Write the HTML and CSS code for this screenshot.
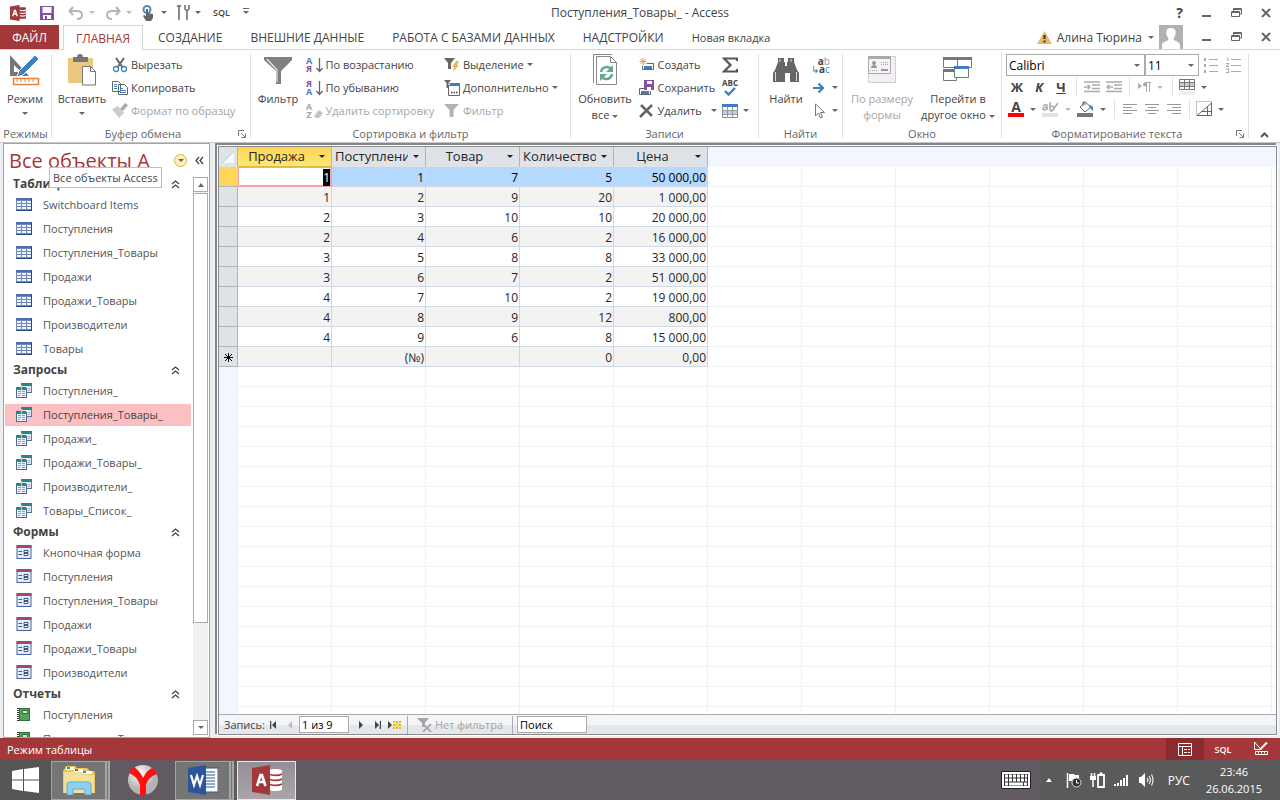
FILE: index.html
```
<!DOCTYPE html>
<html lang="ru">
<head>
    <meta charset="UTF-8">
    <meta name="viewport" content="width=device-width, initial-scale=1.0">
    <title>Поступления_Товары_ - Access</title>
    <link rel="stylesheet" href="styles.css">
</head>
<body>
    <!-- Shared icons -->
    <svg class="sprite" aria-hidden="true">
        <symbol id="i-table" viewBox="0 0 16 13">
            <rect width="16" height="13" fill="#6d88bd"/><rect width="16" height="2" fill="#4a6fb5"/>
            <path d="M1 3h4v2H1zM6 3h4v2H6zM11 3h4v2h-4zM1 6h4v2H1zM6 6h4v2H6zM11 6h4v2h-4zM1 9h4v2H1zM6 9h4v2H6zM11 9h4v2h-4z" fill="#eef3fd"/>
            <path d="M0 12.500h16M15.500 0v13" stroke="#2f4a78"/>
        </symbol>
        <symbol id="i-query" viewBox="0 0 16 15">
            <rect x="5.500" y=".5" width="10" height="9" fill="#e9f0fa" stroke="#56789c"/><rect x="5" width="11" height="3" fill="#2e8580"/>
            <path d="M8 5.500h3M12 5.500h2M12 7.500h2" stroke="#90a5c4"/>
            <rect x=".5" y="5.500" width="10" height="9" fill="#eff4fc" stroke="#4c6c98"/><rect y="4" width="10" height="3" fill="#2e8580"/>
            <path d="M2 8.500h3M6 8.500h3M2 10.500h3M6 10.500h3M2 12.500h2M6 12.500h3" stroke="#8d9cb8"/><path d="M5.500 2v6" stroke="#b9cfe0"/>
        </symbol>
        <symbol id="i-form" viewBox="0 0 15 14">
            <rect x=".5" y=".5" width="14" height="13" fill="#e3ecfb" stroke="#4a6498"/><rect width="15" height="3" fill="#a9466f"/>
            <path d="M2 6.500h3.500M2 9.500h3.500" stroke="#3c5384"/><path d="M7.500 5.500h4v2h-4zM7.500 8.500h4v2h-4z" fill="#fff" stroke="#3c5384"/>
        </symbol>
        <symbol id="i-report" viewBox="0 0 14 13">
            <rect x="2" width="11" height="13" fill="#2f7237"/><rect x="3" y="1" width="9" height="11" fill="#55a05c"/>
            <rect x="5.500" y="2.500" width="5" height="3" fill="#d5edd5" stroke="#2f7237"/><path d="M1 0v13" stroke="#333" stroke-width="2" stroke-dasharray="1 1"/>
        </symbol>
        <symbol id="i-up2" viewBox="0 0 9 9">
            <path d="M1 4l3.500-3L8 4M1 8l3.500-3L8 8" fill="none" stroke="#444" stroke-width="1.300"/>
        </symbol>
        <symbol id="i-funnel" viewBox="0 0 28 28">
            <path d="M0 0h28v3L17 14v13h-5V14L0 3z" fill="#808080"/><path d="M3 2l10 11v12" fill="none" stroke="#e8e8e8" stroke-width="1.200"/>
        </symbol>
        <symbol id="i-sort" viewBox="0 0 14 16"><path d="M10.500 1v13M7.500 11l3 3.500 3-3.500" fill="none" stroke="#666" stroke-width="1.300"/></symbol>
        <symbol id="i-min" viewBox="0 0 10 10"><path d="M0 8h9" stroke="#666" stroke-width="2"/></symbol>
        <symbol id="i-restore" viewBox="0 0 11 10"><path d="M2.500 3V.5h8V6H8.500M.5 3.500h8v5h-8zM2 1.500h8M1 4.500h7" fill="none" stroke="#666"/></symbol>
        <symbol id="i-close" viewBox="0 0 10 10"><path d="M1 1l8 8M9 1L1 9" stroke="#666" stroke-width="2"/></symbol>
        <symbol id="i-launch" viewBox="0 0 8 8"><path d="M.5 6V.5H6M3 3l4 4M7.500 3.500v4h-4" fill="none" stroke="#777"/></symbol>
        <symbol id="i-access" viewBox="0 0 30 30">
            <path d="M17 4h9c3 0 4 1 4 2.500v17c0 1.500-1 2.500-4 2.500h-9z" fill="#a4373a"/>
            <path d="M18 10q7 2 12-.5M18 15q7 2 12-.5M18 20q7 2 12-.5" fill="none" stroke="#fff" stroke-width="2"/>
            <path d="M0 3L18 0v30L0 27z" fill="#a4373a"/>
            <path d="M5 21L8.500 10h1.500l3.500 11M6 17h7" fill="none" stroke="#fff" stroke-width="2.600"/>
        </symbol>
        <symbol id="i-access-task" viewBox="0 0 30 30">
            <path d="M17 6q0-2 6.500-2t6.500 2v18q0 2-6.500 2T17 24z" fill="#fff"/>
            <path d="M18 9.500q7 2 12-.5M18 14.500q7 2 12-.5M18 19.500q7 2 12-.5" fill="none" stroke="#a4373a" stroke-width="1.600"/>
            <path d="M0 3L18 0v30L0 27z" fill="#a4373a"/>
            <path d="M5 21L8.500 10h1.500l3.500 11M6 17h7" fill="none" stroke="#fff" stroke-width="2.600"/>
        </symbol>
    </svg>

    <header class="titlebar">
        <div class="quick">
            <svg class="q-app" width="16" height="16"><use href="#i-access"/></svg>
            <button class="q-btn q-save" aria-label="Сохранить"><svg width="14" height="14" viewBox="0 0 14 14"><path d="M0 0h14v14H0z" fill="#8350a5"/><path d="M2.500 1h9v6h-9zM3 9h8v4H7v-3H5v3H3z" fill="#fff"/></svg></button>
            <button class="q-btn" aria-label="Отменить"><svg width="16" height="14" viewBox="0 0 16 14"><path d="M5 1L1.500 5 5 9M2 5h7q5 0 5 4t-5 4" fill="none" stroke="#b5b5b5" stroke-width="2"/></svg><i class="caret dim"></i></button>
            <button class="q-btn" aria-label="Вернуть"><svg width="16" height="14" viewBox="0 0 16 14"><path d="M11 1l3.500 4L11 9M14 5H7q-5 0-5 4t5 4" fill="none" stroke="#b5b5b5" stroke-width="2"/></svg><i class="caret dim"></i></button>
            <button class="q-btn" aria-label="Режим касания"><svg width="14" height="16" viewBox="0 0 14 16"><circle cx="5" cy="4.500" r="3.500" fill="none" stroke="#4f86bd" stroke-width="2"/><path d="M4 4h2v4l5 1v4l-2 3H4L1 11l1-1 2 1z" fill="#666"/></svg><i class="caret"></i></button>
            <button class="q-btn" aria-label="Настройка"><svg width="13" height="15" viewBox="0 0 13 15"><path d="M0 1h4M2 1v6M2 8v7M1 8h2M8 0v4l2 2 2-2V0M10 6v9" fill="none" stroke="#808080" stroke-width="1.800"/></svg><i class="caret"></i></button>
            <button class="q-btn q-sql">SQL</button>
            <button class="q-btn" aria-label="Настроить панель"><i class="bar-caret"></i></button>
        </div>
        <h1 class="title">Поступления_Товары_ - Access</h1>
        <div class="win-btns">
            <button aria-label="Справка" class="help">?</button>
            <button aria-label="Свернуть"><svg width="10" height="10"><use href="#i-min"/></svg></button>
            <button aria-label="Восстановить"><svg width="11" height="10"><use href="#i-restore"/></svg></button>
            <button aria-label="Закрыть"><svg width="10" height="10"><use href="#i-close"/></svg></button>
        </div>
    </header>

    <nav class="tabs">
        <button class="tab file">ФАЙЛ</button>
        <button class="tab active">ГЛАВНАЯ</button>
        <button class="tab">СОЗДАНИЕ</button>
        <button class="tab">ВНЕШНИЕ ДАННЫЕ</button>
        <button class="tab">РАБОТА С БАЗАМИ ДАННЫХ</button>
        <button class="tab">НАДСТРОЙКИ</button>
        <button class="tab custom">Новая вкладка</button>
        <div class="account">
            <svg width="15" height="13" viewBox="0 0 15 13"><path d="M7.500 0L15 13H0z" fill="#e8b968"/><path d="M7.500 4v4M7.500 9.500v2" stroke="#333" stroke-width="2"/></svg>
            <button class="user">Алина Тюрина<i class="caret"></i></button>
            <svg width="24" height="24" viewBox="0 0 24 24"><path d="M0 0h24v24H0z" fill="#b1b1b1"/><path d="M12 3c6 0 5 6 4 8s-2 3-1 4 6 2 6 5v4H3v-4c0-3 5-4 6-5s0-2-1-4-2-8 4-8z" fill="#fff"/></svg>
        </div>
        <div class="win-btns">
            <button aria-label="Свернуть окно"><svg width="10" height="10"><use href="#i-min"/></svg></button>
            <button aria-label="Восстановить окно"><svg width="11" height="10"><use href="#i-restore"/></svg></button>
            <button aria-label="Закрыть окно"><svg width="10" height="10"><use href="#i-close"/></svg></button>
        </div>
    </nav>

    <section class="ribbon">
        <div class="group g-views">
            <div class="group-body">
                <button class="big"><svg width="32" height="32" viewBox="0 0 32 32"><path d="M1 1v21h19z" fill="#777"/><path d="M5 11v7h7z" fill="#fff"/><path d="M26 1l4 4-16 16-6 2 2-6z" fill="#4080c0" stroke="#fff"/><path d="M4.500 24.500h25v6h-25z" fill="#fff" stroke="#e8823a" stroke-width="1.500"/><path d="M8 25v3M12 25v3M16 25v3M20 25v3M24 25v3" stroke="#e8823a"/></svg><span>Режим</span><i class="caret"></i></button>
            </div>
            <div class="group-name">Режимы</div>
        </div>

        <div class="group g-clip">
            <div class="group-body">
                <button class="big"><svg width="32" height="32" viewBox="0 0 32 32"><path d="M2 4h25v25H2z" fill="#ecc780"/><path d="M7 3h4q0-3 3-3t3 3h5v5H7z" fill="#777"/><path d="M16.500 12.500h8l5 5V31h-13z" fill="#fff" stroke="#777"/><path d="M24.500 12.500v5h5" fill="none" stroke="#777"/></svg><span>Вставить</span><i class="caret"></i></button>
                <div class="stack">
                    <button class="small"><svg width="16" height="16" viewBox="0 0 16 16"><path d="M4 1l7 10M12 1L5 11" stroke="#666" stroke-width="2"/><circle cx="4" cy="12" r="2.500" fill="#fff" stroke="#3f7fbf" stroke-width="1.300"/><circle cx="12" cy="12" r="2.500" fill="#fff" stroke="#3f7fbf" stroke-width="1.300"/></svg>Вырезать</button>
                    <button class="small"><svg width="16" height="16" viewBox="0 0 16 16"><path d="M.5 1.500h6l2 2v8h-8zM6.500 4.500h6l3 3v7h-9z" fill="#fff" stroke="#666"/><path d="M2 4.500h3M2 6.500h3M2 8.500h3M8 8.500h3M8 10.500h6M8 12.500h6" stroke="#3f7fbf"/></svg>Копировать</button>
                    <button class="small" disabled><svg width="16" height="16" viewBox="0 0 16 16"><path d="M0 6l6-3 6 7-5 5z" fill="#ccc"/><path d="M8 6l5-6 3 2-5 6z" fill="#aaa"/></svg>Формат по образцу</button>
                </div>
            </div>
            <div class="group-name with-launch">Буфер обмена<button class="launch" aria-label="Параметры буфера"><svg width="8" height="8"><use href="#i-launch"/></svg></button></div>
        </div>

        <div class="group g-sort">
            <div class="group-body">
                <button class="big"><svg width="28" height="32" viewBox="0 0 28 32"><use href="#i-funnel" width="28" height="28" y="3"/></svg><span>Фильтр</span></button>
                <div class="stack">
                    <button class="small"><span class="letters"><b class="blue">А</b><b class="violet">Я</b></span><svg class="arrow" width="14" height="16"><use href="#i-sort"/></svg>По возрастанию</button>
                    <button class="small"><span class="letters"><b class="violet">Я</b><b class="blue">А</b></span><svg class="arrow" width="14" height="16"><use href="#i-sort"/></svg>По убыванию</button>
                    <button class="small" disabled><span class="letters"><b>A</b><b>Z</b></span><svg class="arrow" width="14" height="16" viewBox="0 0 14 16"><path d="M5 13l5-6 4 3-4 5H7z" fill="#c4c4c4"/></svg>Удалить сортировку</button>
                </div>
                <div class="stack">
                    <button class="small"><svg width="16" height="16" viewBox="0 0 16 16"><path d="M0 1h11L7 6v6H4V6z" fill="#666"/><path d="M12 4l3 0-2 4h2l-6 7 1-5H8z" fill="#ecb450"/></svg>Выделение<i class="caret"></i></button>
                    <button class="small"><svg width="16" height="16" viewBox="0 0 16 16"><path d="M0 0h7L4.500 3v5h-2V3z" fill="#666"/><path d="M4.500 5.500h11v10h-11z" fill="#fff" stroke="#666"/><path d="M5 3h11v3H7z" fill="#3f7fbf"/><path d="M7 12.500h1.500M9.500 12.500H11M12 12.500h1.500" stroke="#444" stroke-width="1.500"/></svg>Дополнительно<i class="caret"></i></button>
                    <button class="small" disabled><svg width="16" height="16" viewBox="0 0 16 16"><path d="M0 1h15L9.500 7v7h-4V7z" fill="#b3b3b3"/></svg>Фильтр</button>
                </div>
            </div>
            <div class="group-name">Сортировка и фильтр</div>
        </div>

        <div class="group g-rec">
            <div class="group-body">
                <button class="big wide"><svg width="26" height="32" viewBox="0 0 26 32"><path d="M20 .5H1.500V29" fill="none" stroke="#888"/><path d="M4.500 2.500h14l6 6v22h-20z" fill="#fff" stroke="#888"/><path d="M18.500 2.500v6h6" fill="none" stroke="#888"/><path d="M9 18q1-5 6-5 3 0 4 2M20 20q-1 5-6 5-3 0-4-2" fill="none" stroke="#69a88c" stroke-width="2.600"/><path d="M21 11v7h-7zM8 27v-7h7z" fill="#69a88c"/></svg><span>Обновить<br>все<i class="caret"></i></span></button>
                <div class="stack">
                    <button class="small"><svg width="16" height="16" viewBox="0 0 16 16"><path d="M3.500 6.500h11v6h-11z" fill="#fff" stroke="#666"/><path d="M5 9h8v3H5z" fill="#3f7fbf"/><circle cx="4" cy="5" r="4" fill="#fff"/><path d="M4 1v7M.5 4.500h7M1.500 2l5 5M6.500 2l-5 5" stroke="#e8a050"/></svg>Создать</button>
                    <button class="small"><svg width="16" height="16" viewBox="0 0 16 16"><path d="M5 8.500H.5v6h11V11" fill="none" stroke="#666"/><path d="M2 11h8v3H2z" fill="#3f7fbf"/><path d="M5 0h10v10H5z" fill="#8350a5"/><path d="M8 1h5v3H8zM8 7h4v3H8z" fill="#fff"/></svg>Сохранить</button>
                    <button class="small"><svg width="16" height="16" viewBox="0 0 16 16"><path d="M2 2l11 11M13 2L1 14" stroke="#666" stroke-width="2.500"/></svg>Удалить<i class="caret far"></i></button>
                </div>
                <div class="stack icons">
                    <button class="small" aria-label="Итоги"><svg width="16" height="16" viewBox="0 0 16 16"><path d="M15 4V1.500H2L8.500 8 2 14.500h13V12" fill="none" stroke="#555" stroke-width="2.200"/></svg></button>
                    <button class="small" aria-label="Орфография"><span class="abc">ABC<svg width="12" height="9" viewBox="0 0 12 9"><path d="M1 4l3.500 3.500L11 1" fill="none" stroke="#3f7fbf" stroke-width="2.400"/></svg></span></button>
                    <button class="small" aria-label="Дополнительно"><svg width="16" height="16" viewBox="0 0 16 16"><path d="M.5 1.500h15v13H.5z" fill="#fff" stroke="#888"/><path d="M0 1h16v3H0z" fill="#3f7fbf"/><path d="M1 8h14v3H1z" fill="#b9d2ea"/><path d="M5.500 4v11M10.500 4v11M1 7.500h15M1 11.500h15" stroke="#999"/></svg><i class="caret"></i></button>
                </div>
            </div>
            <div class="group-name">Записи</div>
        </div>

        <div class="group g-find">
            <div class="group-body">
                <button class="big"><svg width="26" height="32" viewBox="0 0 26 32"><path d="M5 4h6v4h1v4h2V8h1V4h6v4l3 8 2 3v9h-9v-9h-5v9H0v-9l2-3 3-8z" fill="#666"/><path d="M2.500 18v9M7 5v3M23.500 18v9M18 5v3" stroke="#ddd"/></svg><span>Найти</span></button>
                <div class="stack icons">
                    <button class="small" aria-label="Заменить"><span class="replace"><b>a</b>b<br><b><em>↳</em>a</b><em>c</em></span></button>
                    <button class="small" aria-label="Перейти"><svg width="16" height="16" viewBox="0 0 16 16"><path d="M2 8h9M7.500 3.500L12 8l-4.500 4.500" fill="none" stroke="#3f7fbf" stroke-width="2.200"/></svg><i class="caret"></i></button>
                    <button class="small" aria-label="Выделить"><svg width="16" height="16" viewBox="0 0 16 16"><path d="M4.500 1v12l3-3 2 5 2-1-2-4.500h4z" fill="#fff" stroke="#777"/></svg><i class="caret"></i></button>
                </div>
            </div>
            <div class="group-name">Найти</div>
        </div>

        <div class="group g-window">
            <div class="group-body">
                <button class="big wide" disabled><svg width="28" height="32" viewBox="0 0 28 32"><path d="M.5 2.500h27v26H.5z" fill="#f4eef6" stroke="#bbb" stroke-dasharray="2 1"/><path d="M.5 2.500h22v17H.5z" fill="#f6f2f6" stroke="#aaa"/><path d="M0 2h23v3H0z" fill="#aaa"/><path d="M3 14q0-3 3-3t3 3zM4 9a2 2 0 1 0 4 0 2 2 0 1 0-4 0M13 15h7v2h-7z" fill="#999"/><path d="M13 8.500h7M13 10.500h7M2 16.500h8" stroke="#aaa" stroke-dasharray="1 1"/></svg><span>По размеру<br>формы</span></button>
                <button class="big wide"><svg width="30" height="32" viewBox="0 0 30 32"><g fill="#fff" stroke="#777"><path d="M.5 3.500h14v10H.5zM14.500 3.500h14v10h-14zM.5 15.500h13v11H.5z"/></g><path d="M0 3h29v3H0zM0 15h14v3H0z" fill="#777"/><path d="M11.500 12.500h14v11h-14z" fill="#fff" stroke="#777"/><path d="M11 12h15v3H11z" fill="#3f7fbf"/></svg><span>Перейти в<br>другое окно<i class="caret"></i></span></button>
            </div>
            <div class="group-name">Окно</div>
        </div>

        <div class="group g-text">
            <div class="text-tools">
                <div class="tool-row">
                    <label class="combo font"><select aria-label="Шрифт"><option>Calibri</option></select><i class="caret"></i></label>
                    <label class="combo size"><select aria-label="Размер шрифта"><option>11</option></select><i class="caret"></i></label>
                    <button class="tool t1" aria-label="Маркеры" disabled><svg width="14" height="16" viewBox="0 0 14 16"><path d="M0 2.500h2M0 8.500h2M0 14.500h2" stroke="#aaa" stroke-width="3"/><path d="M5 2.500h9M5 8.500h9M5 14.500h9" stroke="#aaa"/></svg></button>
                    <button class="tool" aria-label="Нумерация" disabled><svg width="15" height="16" viewBox="0 0 15 16"><path d="M1 1h1v3M0 6.500h3l-3 3h3M0 12h3l-1 1.500 1 2H0M5 2.500h10M5 8.500h10M5 14.500h10" fill="none" stroke="#aaa"/></svg></button>
                </div>
                <div class="tool-row">
                    <button class="tool glyph"><b>Ж</b></button>
                    <button class="tool glyph"><b><em>К</em></b></button>
                    <button class="tool glyph"><b><u>Ч</u></b></button>
                    <i class="vsep"></i>
                    <button class="tool" aria-label="Увеличить отступ" disabled><svg width="16" height="12" viewBox="0 0 16 12"><path d="M0 1h16M8 4h8M8 7.500h8M0 10.500h16M0 6h6M3.500 3.500L6 6 3.500 8.500" fill="none" stroke="#aaa" stroke-width="1.300"/></svg></button>
                    <button class="tool" aria-label="Уменьшить отступ" disabled><svg width="16" height="12" viewBox="0 0 16 12"><path d="M0 1h16M8 4h8M8 7.500h8M0 10.500h16M1 6h6M3.500 3.500L1 6l2.500 2.500" fill="none" stroke="#aaa" stroke-width="1.300"/></svg></button>
                    <i class="vsep"></i>
                    <button class="tool drop" aria-label="Направление текста" disabled><svg width="13" height="10" viewBox="0 0 13 10"><path d="M0 1v6l4-3z" fill="#aaa"/><path d="M13 .5H7M8.500 0v10M11.500 0v10" stroke="#aaa"/><circle cx="7" cy="2.500" r="2" fill="#aaa"/></svg><i class="caret dim"></i></button>
                    <i class="vsep"></i>
                    <button class="tool drop" aria-label="Сетка"><svg width="16" height="16" viewBox="0 0 16 16"><path d="M.5.5h15v10H.5z" fill="#fff" stroke="#777"/><path d="M1 4h14v3H1z" fill="#b9d2ea"/><path d="M5.500 0v11M10.500 0v11M0 3.500h16M0 7.500h16" stroke="#777"/><path d="M0 12h16v4H0z" fill="#eee"/></svg><i class="caret"></i></button>
                </div>
                <div class="tool-row">
                    <button class="tool drop color-a" aria-label="Цвет текста"><b>A</b><i class="caret"></i></button>
                    <button class="tool drop" aria-label="Цвет выделения" disabled><svg width="17" height="16" viewBox="0 0 17 16"><path d="M1 5q4-3 4 0v4M5 6q-4 0-4 2t4 0M8 1v8q4 1 4-2T8 6M16 2l-6 8H8" fill="none" stroke="#aaa" stroke-width="1.500"/><path d="M0 12h16v4H0z" fill="#e4e0e6"/></svg><i class="caret dim"></i></button>
                    <button class="tool drop" aria-label="Цвет фона"><svg width="17" height="16" viewBox="0 0 17 16"><path d="M8 1l6 5-6 5-5-5zM6 5V1h2v3" fill="#fff" stroke="#666"/><path d="M12 4q5 0 4 6l-3-3z" fill="#3f7fbf"/><path d="M0 12h16v4H0z" fill="#777"/></svg><i class="caret"></i></button>
                    <i class="vsep"></i>
                    <button class="tool" aria-label="По левому краю" disabled><svg width="14" height="11" viewBox="0 0 14 11"><path d="M0 .5h14M0 3.500h9M0 6.500h14M0 9.500h9" stroke="#999"/></svg></button>
                    <button class="tool" aria-label="По центру" disabled><svg width="14" height="11" viewBox="0 0 14 11"><path d="M0 .5h14M3 3.500h8M0 6.500h14M3 9.500h8" stroke="#999"/></svg></button>
                    <button class="tool" aria-label="По правому краю" disabled><svg width="14" height="11" viewBox="0 0 14 11"><path d="M0 .5h14M5 3.500h9M0 6.500h14M5 9.500h9" stroke="#999"/></svg></button>
                    <i class="vsep"></i>
                    <button class="tool drop" aria-label="Чередование строк"><svg width="16" height="16" viewBox="0 0 16 16"><path d="M.5.5h15v14H.5z" fill="none" stroke="#888" stroke-dasharray="1 1"/><path d="M1 14.500L15.500 2v12.500H1M11.500 6v9M6 10.500h9" fill="none" stroke="#666"/></svg><i class="caret"></i></button>
                </div>
            </div>
            <div class="group-name with-launch">Форматирование текста<button class="launch" aria-label="Параметры текста"><svg width="8" height="8"><use href="#i-launch"/></svg></button></div>
        </div>
        <button class="collapse" aria-label="Свернуть ленту"><svg width="9" height="6" viewBox="0 0 9 6"><path d="M1 5l3.500-3.500L8 5" fill="none" stroke="#555" stroke-width="2"/></svg></button>
    </section>

    <main class="workspace">
        <aside class="pane">
            <div class="pane-head">
                <h2>Все объекты A</h2>
                <button class="pane-menu" aria-label="Выбор объектов"><i class="caret"></i></button>
                <button class="pane-hide" aria-label="Скрыть область"><svg width="9" height="9" viewBox="0 0 9 9"><path d="M4 1L1 4.500 4 8M8 1L5 4.500 8 8" fill="none" stroke="#444" stroke-width="1.300"/></svg></button>
                <div class="tip">Все объекты Access</div>
            </div>
            <div class="pane-body">
                <div class="objects">
                    <h3>Таблицы<svg width="9" height="9"><use href="#i-up2"/></svg></h3>
                    <a href="#"><svg width="16" height="13"><use href="#i-table"/></svg>Switchboard Items</a>
                    <a href="#"><svg width="16" height="13"><use href="#i-table"/></svg>Поступления</a>
                    <a href="#"><svg width="16" height="13"><use href="#i-table"/></svg>Поступления_Товары</a>
                    <a href="#"><svg width="16" height="13"><use href="#i-table"/></svg>Продажи</a>
                    <a href="#"><svg width="16" height="13"><use href="#i-table"/></svg>Продажи_Товары</a>
                    <a href="#"><svg width="16" height="13"><use href="#i-table"/></svg>Производители</a>
                    <a href="#"><svg width="16" height="13"><use href="#i-table"/></svg>Товары</a>
                    <h3>Запросы<svg width="9" height="9"><use href="#i-up2"/></svg></h3>
                    <a href="#"><svg width="16" height="15"><use href="#i-query"/></svg>Поступления_</a>
                    <a href="#" class="selected"><svg width="16" height="15"><use href="#i-query"/></svg>Поступления_Товары_</a>
                    <a href="#"><svg width="16" height="15"><use href="#i-query"/></svg>Продажи_</a>
                    <a href="#"><svg width="16" height="15"><use href="#i-query"/></svg>Продажи_Товары_</a>
                    <a href="#"><svg width="16" height="15"><use href="#i-query"/></svg>Производители_</a>
                    <a href="#"><svg width="16" height="15"><use href="#i-query"/></svg>Товары_Список_</a>
                    <h3>Формы<svg width="9" height="9"><use href="#i-up2"/></svg></h3>
                    <a href="#"><svg width="15" height="14"><use href="#i-form"/></svg>Кнопочная форма</a>
                    <a href="#"><svg width="15" height="14"><use href="#i-form"/></svg>Поступления</a>
                    <a href="#"><svg width="15" height="14"><use href="#i-form"/></svg>Поступления_Товары</a>
                    <a href="#"><svg width="15" height="14"><use href="#i-form"/></svg>Продажи</a>
                    <a href="#"><svg width="15" height="14"><use href="#i-form"/></svg>Продажи_Товары</a>
                    <a href="#"><svg width="15" height="14"><use href="#i-form"/></svg>Производители</a>
                    <h3>Отчеты<svg width="9" height="9"><use href="#i-up2"/></svg></h3>
                    <a href="#"><svg width="14" height="13"><use href="#i-report"/></svg>Поступления</a>
                    <a href="#"><svg width="14" height="13"><use href="#i-report"/></svg>Поступления_Товары</a>
                </div>
                <div class="scrollbar">
                    <button aria-label="Вверх"><i class="caret up"></i></button>
                    <div class="thumb"></div>
                    <button aria-label="Вниз"><i class="caret"></i></button>
                </div>
            </div>
        </aside>

        <section class="sheet">
            <div class="grid">
                <table>
                    <colgroup><col class="c-sel"><col><col><col><col><col></colgroup>
                    <thead>
                        <tr>
                            <th class="corner"><svg width="12" height="12" viewBox="0 0 12 12"><path d="M12 0v12H0z" fill="#f4f7fb"/><path d="M12 0L0 12" stroke="#b8c8dc"/></svg></th>
                            <th class="current"><div><span>Продажа</span><i class="caret"></i></div></th>
                            <th><div><span class="cut">Поступление</span><i class="caret"></i></div></th>
                            <th><div><span>Товар</span><i class="caret"></i></div></th>
                            <th><div><span class="cut">Количество</span><i class="caret"></i></div></th>
                            <th><div><span>Цена</span><i class="caret"></i></div></th>
                        </tr>
                    </thead>
                    <tbody>
                        <tr class="on"><th></th><td class="edit"><mark>1</mark></td><td>1</td><td>7</td><td>5</td><td>50 000,00</td></tr>
                        <tr><th></th><td>1</td><td>2</td><td>9</td><td>20</td><td>1 000,00</td></tr>
                        <tr><th></th><td>2</td><td>3</td><td>10</td><td>10</td><td>20 000,00</td></tr>
                        <tr><th></th><td>2</td><td>4</td><td>6</td><td>2</td><td>16 000,00</td></tr>
                        <tr><th></th><td>3</td><td>5</td><td>8</td><td>8</td><td>33 000,00</td></tr>
                        <tr><th></th><td>3</td><td>6</td><td>7</td><td>2</td><td>51 000,00</td></tr>
                        <tr><th></th><td>4</td><td>7</td><td>10</td><td>2</td><td>19 000,00</td></tr>
                        <tr><th></th><td>4</td><td>8</td><td>9</td><td>12</td><td>800,00</td></tr>
                        <tr><th></th><td>4</td><td>9</td><td>6</td><td>8</td><td>15 000,00</td></tr>
                        <tr class="new"><th><svg width="9" height="9" viewBox="0 0 9 9"><path d="M4.500 0v9M0 4.500h9M1 1l7 7M8 1L1 8" stroke="#000"/></svg></th><td></td><td>(№)</td><td></td><td>0</td><td>0,00</td></tr>
                    </tbody>
                </table>
            </div>
            <div class="recnav">
                <label for="rec">Запись:</label>
                <button aria-label="Первая"><svg width="7" height="8" viewBox="0 0 7 8"><path d="M6 0v8L2 4z" fill="#444"/><path d="M.5 0v8" stroke="#444" stroke-width="1.500"/></svg></button>
                <button aria-label="Предыдущая" disabled><svg width="7" height="8" viewBox="0 0 7 8"><path d="M5 0v8L1 4z" fill="#bbb"/></svg></button>
                <input id="rec" class="rec" type="text" value="1 из 9">
                <button aria-label="Следующая"><svg width="7" height="8" viewBox="0 0 7 8"><path d="M2 0v8l4-4z" fill="#444"/></svg></button>
                <button aria-label="Последняя"><svg width="7" height="8" viewBox="0 0 7 8"><path d="M1 0v8l4-4z" fill="#444"/><path d="M6.500 0v8" stroke="#444" stroke-width="1.500"/></svg></button>
                <button aria-label="Новая запись"><svg width="13" height="8" viewBox="0 0 13 8"><path d="M0 0v8l4-4z" fill="#444"/><path d="M5 1h8M5 4h8M5 7h8" stroke="#e6b820" stroke-width="2" stroke-dasharray="2 1"/><path d="M7 2h4v4H7z" fill="#f5d860"/></svg></button>
                <i class="rsep"></i>
                <button class="nofilter" disabled><svg width="15" height="14" viewBox="0 0 15 14"><path d="M0 0h12L8 5v4H5V5z" fill="#a8a8a8"/><path d="M6 6l8 8M14 6l-8 8" stroke="#a8a8a8" stroke-width="1.800"/></svg>Нет фильтра</button>
                <i class="rsep"></i>
                <input class="search" type="text" aria-label="Поиск" value="Поиск">
            </div>
        </section>
    </main>

    <footer class="status">
        <span>Режим таблицы</span>
        <div class="views">
            <button class="on" aria-label="Режим таблицы"><svg width="14" height="13" viewBox="0 0 14 13"><path d="M.5.5h13v12H.5zM0 3.500h14M4.500 3v10M6 6.500h3M10 6.500h2M6 9.500h3M10 9.500h2" fill="none" stroke="#fff"/></svg></button>
            <button class="sql">SQL</button>
            <button aria-label="Конструктор"><svg width="14" height="14" viewBox="0 0 14 14"><path d="M.5 0v7.500H7zM1.500 9.500h12v3h-12zM4.500 10v1.500M7.500 10v1.500M10.500 10v1.500" fill="none" stroke="#fff"/><path d="M13 .5L6.500 7" stroke="#fff" stroke-width="2"/></svg></button>
        </div>
    </footer>

    <div class="taskbar">
        <button class="start" aria-label="Пуск"><svg width="27" height="26" viewBox="0 0 27 26"><path d="M0 4l11-2v10.500H0zM12 2l15-2v12.500H12zM0 13.500h11V24L0 22zM12 13.500h15V26l-15-2z" fill="#fff"/></svg></button>
        <button class="app multi" aria-label="Проводник"><svg width="32" height="30" viewBox="0 0 32 30"><path d="M2 3q0-2 2-2h8l2 2h10l3 3h3q2 0 2 2v20H0V6z" fill="#e8c765"/><path d="M3 2h8v3H3z" fill="#fff"/><path d="M4 2h3v2H4z" fill="#1fae3a"/><path d="M11 4h9v3h-9z" fill="#fff"/><path d="M12 4h3v2h-3z" fill="#d2452c"/><path d="M19 6h10v3H19z" fill="#fff"/><path d="M20 6h3v2h-3z" fill="#2c8ad8"/><path d="M1 7h17l2 3h11v18H1z" fill="#f5e09a"/><path d="M4 30V20q0-3 3-3h18q3 0 3 3v10h-6v-6H10v6z" fill="#8fd0ec" stroke="#5aaed2"/></svg></button>
        <button class="app plain" aria-label="Яндекс"><svg width="32" height="32" viewBox="0 0 32 32"><defs><radialGradient id="ball" cx=".4" cy=".3"><stop offset="0" stop-color="#fff"/><stop offset="1" stop-color="#b4b4b4"/></radialGradient></defs><circle cx="16" cy="16" r="15" fill="url(#ball)"/><path d="M2 9q2-4 5-6 6 4 9 11Q20 6 25 4q4 2 5 6-9 3-11 11v10h-6V21Q10 12 2 9z" fill="#f11"/></svg></button>
        <button class="app multi" aria-label="Word"><svg width="30" height="30" viewBox="0 0 30 30"><path d="M16 3h14v24H16z" fill="#fff" stroke="#2b579a"/><path d="M18 7h9M18 10h9M18 13h9M18 16h9M18 19h9M18 22h9" stroke="#2b579a" stroke-width="1.200"/><path d="M0 3L18 0v30L0 27z" fill="#2b579a"/><path d="M3 10l3 10 3-9 3 9 3-10" fill="none" stroke="#fff" stroke-width="2.200"/></svg></button>
        <button class="app live" aria-label="Access"><svg width="30" height="30"><use href="#i-access-task"/></svg></button>
        <div class="tray">
            <button class="keys" aria-label="Клавиатура"><svg width="30" height="18" viewBox="0 0 30 18"><path d="M.5.5h29v17H.5z" fill="#fff" stroke="#222"/><path d="M3 3h24v12H3z" fill="#333"/><path d="M4 5h22M4 9h22" stroke="#fff" stroke-width="3" stroke-dasharray="3 1"/><path d="M4 13h3M8 13h14M23 13h3" stroke="#fff" stroke-width="3"/></svg></button>
            <div class="tray-end">
                <button class="more" aria-label="Скрытые значки"><i class="caret up white"></i></button>
                <button aria-label="Центр поддержки"><svg width="16" height="16" viewBox="0 0 16 16"><path d="M1.500 1v15" stroke="#fff" stroke-width="1.500"/><path d="M3 2h5l1 1h4v6H3z" fill="#fff"/><circle cx="10.500" cy="10.500" r="4.500" fill="#333" stroke="#ddd"/><path d="M10.500 8v3h2.500" fill="none" stroke="#fff"/></svg></button>
                <button aria-label="Питание"><svg width="16" height="16" viewBox="0 0 16 16"><path d="M0 4h6v4H0z" fill="#fff"/><path d="M1.500 1v3M4.500 1v3M3 8v7" stroke="#fff" stroke-width="1.500"/><path d="M8 3h6v12H8zM9.500 1.500h3" fill="none" stroke="#fff" stroke-width="1.800"/></svg></button>
                <button aria-label="Сеть"><svg width="16" height="14" viewBox="0 0 16 14"><path d="M0 11h2v2H0zM3 10h2v3H3zM6 7h2v6H6zM9 5h2v8H9zM12 2h2v11h-2z" fill="#fff"/></svg></button>
                <button aria-label="Громкость"><svg width="16" height="14" viewBox="0 0 16 14"><path d="M1 4h2l4-4v14l-4-4H1z" fill="#fff"/><path d="M9 5q2 2 0 4M11 3q3 4 0 8M13.500 1.500q3 5.500 0 11" fill="none" stroke="#eee" stroke-width="1.200"/></svg></button>
                <button class="lang">РУС</button>
                <time datetime="2015-06-26T23:46">23:46<br>26.06.2015</time>
            </div>
        </div>
    </div>
</body>
</html>
```
FILE: styles.css
```
* {
    box-sizing: border-box;
}
body {
    font-family: "Open Sans", "Noto Sans", sans-serif;
    font-size: 12px;
    color: #444;
    background-color: #fff;
    margin: 0;
    height: 100vh;
    overflow: hidden;
    display: flex;
    flex-direction: column;
}
button, input, select {
    font: inherit;
    color: inherit;
    background: none;
    border: none;
    padding: 0;
    margin: 0;
}
button {
    display: flex;
    align-items: center;
    justify-content: center;
    white-space: nowrap;
}
button:disabled {
    color: #a6a6a6;
}
svg {
    flex: none;
}
.sprite {
    position: absolute;
    width: 0;
    height: 0;
}
.caret {
    flex: none;
    display: inline-block;
    width: 0;
    height: 0;
    border: 3px solid transparent;
    border-top-color: #666;
    border-bottom-width: 0;
}
.caret.dim {
    border-top-color: #bbb;
}
.caret.up {
    border-top-width: 0;
    border-bottom: 4px solid #666;
}
.caret.white {
    border-bottom-color: #fff;
}

/* Title bar */
.titlebar {
    flex: none;
    height: 25px;
    display: grid;
    grid-template-columns: 1fr auto 1fr;
    align-items: center;
}
.quick {
    display: flex;
    align-items: center;
    padding-left: 10px;
    height: 22px;
}
.q-app {
    margin-right: 14px;
}
.q-btn {
    margin-right: 10px;
    gap: 5px;
}
.q-save {
    margin-right: 14px;
}
.q-sql {
    font-size: 9px;
    font-weight: 600;
    margin: 0 13px 0 2px;
}
.bar-caret {
    border: 3px solid transparent;
    border-top-color: #666;
    border-bottom: 0;
    position: relative;
}
.bar-caret::before {
    content: "";
    position: absolute;
    left: -3px;
    top: -6px;
    width: 6px;
    height: 1px;
    background-color: #666;
}
.title {
    margin: 0;
    font-size: 12px;
    font-weight: 400;
}
.win-btns {
    display: flex;
    justify-content: flex-end;
    align-items: center;
    padding-right: 9px;
    gap: 19px;
    height: 22px;
}
.help {
    font-size: 14px;
    font-weight: 700;
}

/* Ribbon tabs */
.tabs {
    flex: none;
    display: flex;
    height: 25px;
    border-bottom: 1px solid #d4d4d4;
}
.tab {
    padding: 0 14px;
    height: 24px;
}
.tab.file {
    background-color: #a4373a;
    color: #fff;
    width: 59px;
    margin-right: 4px;
}
.tab.active {
    height: 25px;
    color: #a4373a;
    background-color: #fff;
    border: 1px solid #d4d4d4;
    border-bottom: none;
    padding: 0 12px;
    margin-right: 1px;
}
.tab.custom {
    font-size: 11px;
}
.account {
    margin-left: auto;
    display: flex;
    align-items: center;
    gap: 5px;
}
.user {
    gap: 6px;
}
.tabs .win-btns {
    height: 24px;
    padding-left: 19px;
}

/* Ribbon */
.ribbon {
    flex: none;
    display: flex;
    height: 92px;
    padding-top: 4px;
    font-size: 11px;
}
.group {
    flex: none;
    height: 84px;
    display: flex;
    flex-direction: column;
    border-right: 1px solid #e1e1e1;
}
.g-views { width: 52px; }
.g-clip { width: 199px; }
.g-sort { width: 320px; }
.g-rec { width: 188px; }
.g-find { width: 84px; }
.g-window { width: 159px; }
.g-text { width: 247px; }
.group-body {
    flex: 1;
    display: flex;
    justify-content: space-between;
    padding: 0 4px;
}
.group-name {
    position: relative;
    text-align: center;
    height: 14px;
    line-height: 20px;
    color: #666;
}
.with-launch {
    padding-right: 16px;
}
.launch {
    position: absolute;
    right: 4px;
    top: 6px;
}
.big {
    flex-direction: column;
    justify-content: flex-start;
    align-items: center;
    line-height: 16px;
    width: 52px;
    height: 68px;
    gap: 5px;
}
.g-views .big {
    width: 42px;
}
.g-sort .big,
.g-find .big {
    width: 46px;
}
.big.wide {
    width: 60px;
}
.g-window .big.wide {
    width: 70px;
}
.g-window .group-body {
    padding-right: 8px;
}
.big .caret {
    margin-left: 3px;
    vertical-align: middle;
}
.big > .caret {
    margin: 0;
}
.stack {
    display: flex;
    flex-direction: column;
}
.small {
    height: 23px;
    padding-bottom: 2px;
    justify-content: flex-start;
    gap: 3px;
}
.g-clip .stack {
    width: 134px;
}
.g-sort .stack {
    width: 134px;
}
.g-sort .stack + .stack {
    width: 122px;
}
.letters {
    width: 7px;
    font-size: 9px;
    line-height: 8px;
    display: flex;
    flex-direction: column;
}
.arrow {
    margin-left: -7px;
}
.blue { color: #3f7fbf; }
.violet { color: #8350a5; }
.g-rec .stack {
    width: 80px;
}
.g-rec .stack.icons {
    width: 32px;
}
.small .far {
    margin: 0 2px 0 auto;
}
.abc {
    font-size: 8px;
    line-height: 8px;
    font-weight: 700;
    display: flex;
    flex-direction: column;
    align-items: center;
}
.icons .small {
    gap: 5px;
}
.replace {
    font-size: 10px;
    line-height: 8px;
    text-align: right;
    color: #999;
}
.replace b {
    color: #444;
}
.replace em {
    color: #3f7fbf;
    font-style: normal;
    font-weight: 400;
}

/* Text formatting */
.text-tools {
    flex: 1;
    padding-left: 4px;
}
.tool-row {
    display: flex;
    align-items: center;
    height: 22px;
}
.combo {
    position: relative;
    border: 1px solid #ababab;
    height: 22px;
    display: flex;
    align-items: center;
    font-size: 12px;
    color: #000;
}
.combo.font { width: 139px; }
.combo.size { width: 54px; }
.combo select {
    appearance: none;
    width: 100%;
    padding-left: 2px;
}
.combo .caret {
    position: absolute;
    right: 4px;
}
.tool {
    min-width: 22px;
    height: 22px;
}
.tool.t1 {
    margin-left: 1px;
}
.tool.drop {
    gap: 6px;
    padding: 0 4px 0 2px;
    min-width: 34px;
}
.glyph {
    font-size: 13px;
}
.vsep {
    width: 1px;
    height: 20px;
    margin: 0 4px;
    background-color: #e1e1e1;
}
.color-a b {
    width: 16px;
    height: 16px;
    line-height: 12px;
    font-size: 14px;
    border-bottom: 4px solid #f00;
}
.collapse {
    align-self: flex-end;
    margin: 0 auto 4px;
}

/* Workspace */
.workspace {
    flex: 1;
    min-height: 0;
    display: flex;
    border-top: 1px solid #c6c6c6;
    background-color: #eceef1;
}
.pane {
    width: 207px;
    margin: 0 0 0 3px;
    flex: none;
    display: flex;
    flex-direction: column;
    background-color: #fff;
    border: 1px solid #a3a3a8;
}
.pane-head {
    position: relative;
    flex: none;
    display: flex;
    align-items: center;
    height: 31px;
    padding: 2px 5px 0;
}
.pane-head h2 {
    margin: 0;
    flex: 1;
    font-size: 20px;
    line-height: 26px;
    font-weight: 400;
    color: #a4373a;
    white-space: nowrap;
}
.pane-menu {
    width: 13px;
    height: 13px;
    border: 1px solid #d8b44a;
    border-radius: 50%;
    background-color: #fdf0bd;
}
.pane-hide {
    margin-left: 8px;
    height: 20px;
}
.tip {
    position: absolute;
    left: 45px;
    top: 23px;
    z-index: 1;
    height: 21px;
    line-height: 19px;
    padding: 0 3px;
    font-size: 11px;
    white-space: nowrap;
    background-color: #fff;
    border: 1px solid #bebebe;
}
.pane-body {
    flex: 1;
    min-height: 0;
    display: flex;
}
.objects {
    flex: 1;
    overflow: hidden;
    padding-left: 1px;
}
.objects h3 {
    margin: 0;
    height: 18px;
    line-height: 18px;
    font-size: 12px;
    padding: 0 13px 0 8px;
    display: flex;
    align-items: center;
    justify-content: space-between;
}
.objects a {
    height: 24px;
    border: 1px solid #fff;
    border-width: 1px 0;
    display: flex;
    align-items: center;
    padding: 0 0 2px 11px;
    font-size: 11px;
    color: #555;
    text-decoration: none;
    white-space: nowrap;
    margin-right: 2px;
}
.objects a svg {
    width: 16px;
    margin-right: 11px;
}
.objects a.selected {
    background-color: #fdc0c2;
    background-clip: padding-box;
    color: #444;
}
.scrollbar {
    flex: none;
    width: 15px;
    margin: 2px 1px 2px 0;
    background-color: #f1f1f1;
    display: flex;
    flex-direction: column;
}
.scrollbar button {
    height: 15px;
    background-color: #fff;
    border: 1px solid #ababab;
}
.scrollbar button:last-child {
    margin-top: auto;
}
.thumb {
    height: 77%;
    margin-top: 1px;
    background-color: #fff;
    border: 1px solid #ababab;
}

/* Datasheet */
.sheet {
    flex: 1;
    min-width: 0;
    margin: 3px 3px 3px 8px;
    display: flex;
    flex-direction: column;
    border: 1px solid #868c90;
    outline: 1px solid #fff;
    box-shadow: -2px -2px 0 1px #868686;
}
.grid {
    flex: 1;
    min-height: 0;
    overflow: hidden;
    background:
        linear-gradient(#f4f6ff, #f4f6ff) 0 0 / 100% 20px no-repeat,
        linear-gradient(#f4f6ff, #f4f6ff) 0 0 / 18px 100% no-repeat,
        linear-gradient(to left, #f0f0f5 1px, transparent 1px) 19px 0 / 94px 100%,
        linear-gradient(to top, #f0f0f5 1px, transparent 1px) 0 0 / 100% 20px,
        #fff;
}
table {
    table-layout: fixed;
    width: 489px;
    border-spacing: 0;
    color: #262626;
}
col {
    width: 94px;
}
.c-sel {
    width: 19px;
}
th, td {
    height: 20px;
    padding: 2px 1px 0;
    line-height: 17px;
    border-right: 1px solid #d0d7e5;
    border-bottom: 1px solid #d0d7e5;
    font-weight: 400;
    text-align: right;
    background-color: #fff;
}
th {
    background-color: #dfe3e8;
    border-color: #b1b5ba;
    text-align: center;
}
thead th {
    padding-top: 0;
    border-bottom-color: #dfe3e8;
    font-size: 13px;
}
th div {
    display: flex;
    align-items: center;
    padding-right: 5px;
    gap: 5px;
}
th span {
    flex: 1;
    overflow: hidden;
    white-space: nowrap;
}
th .cut {
    text-align: left;
    margin-left: 2px;
}
th .caret {
    border-top-color: #222;
}
th svg {
    display: block;
    margin: 0 auto;
}
.current {
    background: linear-gradient(#ffd455, #ffe873);
    border-color: #e0b840;
}
tbody tr:nth-child(even) td {
    background-color: #f3f3f3;
}
tbody .on td {
    background-color: #b5d8ff;
    color: #000;
}
tbody .on th {
    background-color: #ffd65c;
    border-right-color: #ffd65c;
}
tbody .on .edit {
    background-color: #fff;
    box-shadow: inset 0 0 0 1px #f5a3a8;
    border-color: #f5a3a8;
}
mark {
    display: inline-block;
    background-color: #000;
    color: #fff;
}
.recnav {
    flex: none;
    height: 20px;
    display: flex;
    align-items: center;
    padding-left: 5px;
    font-size: 11px;
    color: #444;
    border-top: 1px solid #a5abb1;
    background: linear-gradient(#f4f5f7 50%, #e5e7ea 50%);
}
.recnav button {
    width: 17px;
    height: 18px;
}
.recnav input {
    height: 17px;
    border: 1px solid #ababab;
    background-color: #fff;
    color: #000;
    padding: 0 2px;
}
.rec {
    width: 50px;
    margin-right: 3px;
}
.search {
    width: 70px;
}
.recnav .nofilter {
    width: 96px;
    gap: 3px;
}
.rsep {
    width: 1px;
    height: 18px;
    margin: 0 4px;
    background-color: #a5abb1;
}

/* Status bar */
.status {
    flex: none;
    height: 22px;
    display: flex;
    align-items: center;
    justify-content: space-between;
    padding-left: 7px;
    background-color: #a4373a;
    color: #fff;
    font-size: 11px;
}
.views {
    display: flex;
}
.views button {
    width: 38px;
    height: 22px;
}
.views .on {
    background-color: #8a2b2e;
}
.views .sql {
    font-size: 9px;
    font-weight: 600;
}

/* Taskbar */
.taskbar {
    flex: none;
    height: 40px;
    display: flex;
    align-items: center;
    background-color: #625a61;
    color: #fff;
}
.start {
    width: 51px;
    height: 40px;
    background-color: #555;
}
.app {
    width: 59px;
    height: 39px;
    margin-right: 3px;
}
.multi {
    background-color: #757575;
    border: 1px solid #a5a5a5;
    border-right: 5px double #a5a5a5;
}
.live {
    background: linear-gradient(#958f95, #aaa5aa);
    border: 1px solid #e8e8e8;
}
.tray {
    margin-left: auto;
    display: flex;
    align-items: center;
    height: 40px;
}
.keys {
    margin-right: 10px;
}
.tray-end {
    display: flex;
    align-items: center;
    gap: 8px;
    height: 40px;
    padding: 0 18px 0 5px;
    background-color: #5a5a5a;
}
.more {
    margin-right: 6px;
}
.lang {
    margin: 0 8px 0 6px;
}
.tray time {
    text-align: center;
    line-height: 17px;
    font-size: 11px;
}
```
